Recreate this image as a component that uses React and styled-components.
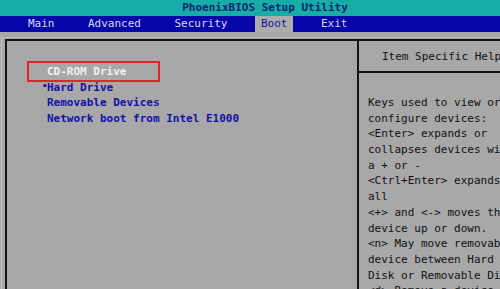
import React from 'react';
import styled, {createGlobalStyle} from "styled-components";

const GlobalStyle = createGlobalStyle`
    html, body {
        margin: 0;
        padding: 0;
        background: #a8a8a8;
    }
    body {
        width: 500px;
        height: 289px;
        overflow: hidden;
    }
`

const menus = ["Main", "Advanced", "Security", "Boot", "Exit"]

const devices = [
	{name: "CD-ROM Drive", active: true},
	{name: "Hard Drive", bullet: true},
	{name: "Removable Devices"},
	{name: "Network boot from Intel E1000"},
]

const helpLines = [
	"Keys used to view or",
	"configure devices:",
	"<Enter> expands or",
	"collapses devices with",
	"a + or -",
	"<Ctrl+Enter> expands",
	"all",
	"<+> and <-> moves the",
	"device up or down.",
	"<n> May move removable",
	"device between Hard",
	"Disk or Removable Disk",
	"<d> Remove a device",
]

const App = () => {
	return (
		<Screen>
			<GlobalStyle/>
			<TitleBar>PhoenixBIOS Setup Utility</TitleBar>
			<MenuBar>
				{menus.map((item) => (
					<MenuItem key={item} $selected={item === "Boot"}>{item}</MenuItem>
				))}
			</MenuBar>
			<Frame>
				<DevicePanel>
					{devices.map((item) => {
						const row = (
							<Device key={item.name} $active={item.active}>
								{item.bullet && <Bullet>•</Bullet>}
								{item.name}
							</Device>
						)
						return item.active ? <Marked key={item.name}>{row}</Marked> : row
					})}
				</DevicePanel>
				<HelpPanel>
					<HelpHeader>Item Specific Help</HelpHeader>
					<HelpBody>
						{helpLines.map((line, index) => (
							<HelpLine key={index}>{line}</HelpLine>
						))}
					</HelpBody>
				</HelpPanel>
			</Frame>
		</Screen>
	);
};

export default App;

const Screen = styled.div`
    width: 500px;
    height: 289px;
    overflow: hidden;
    display: flex;
    flex-direction: column;
    background: #a8a8a8;
    font-family: "DejaVu Sans Mono", "Liberation Mono", monospace;
    font-size: 11px;
`
const TitleBar = styled.div`
    height: 16px;
    line-height: 16px;
    background: #17aca6;
    color: #0c2470;
    font-weight: bold;
    text-align: center;
    white-space: nowrap;
    padding-left: 30px;
`
const MenuBar = styled.div`
    height: 16px;
    background: #0606a8;
    display: flex;
    column-gap: 21.5px;
    padding-left: 22px;
`
const MenuItem = styled.div`
    line-height: 16px;
    padding: 0 6px;
    white-space: nowrap;
    color: ${({$selected}) => $selected ? "#1010a0" : "#d8d8f4"};
    background: ${({$selected}) => $selected ? "#acacac" : "transparent"};
`
const Frame = styled.div`
    flex: 1;
    margin: 5px 0 0 1px;
    padding: 1px 0 0 3px;
    border-left: 1px solid #c4c4c4;
    border-top: 1px solid #bcbcbc;
    display: flex;
    min-height: 0;
`
const DevicePanel = styled.div`
    width: 354px;
    flex-shrink: 0;
    box-sizing: border-box;
    border-top: 2px solid #141414;
    border-left: 2px solid #141414;
    border-right: 2px solid #141414;
    padding: 20px 0 0 40px;
`
const Marked = styled.div`
    width: 133px;
    height: 21px;
    box-sizing: border-box;
    margin: 0 0 -2px -20px;
    padding: 1px 0 0 18px;
    border: 2px solid #e0262a;
`
const Device = styled.div`
    position: relative;
    height: 15.3px;
    line-height: 15.3px;
    white-space: nowrap;
    font-weight: bold;
    color: ${({$active}) => $active ? "#f0f0f0" : "#1212a6"};
`
const Bullet = styled.span`
    position: absolute;
    left: -5px;
    top: -1px;
    font-size: 9px;
`
const HelpPanel = styled.div`
    flex: 1;
    border-top: 2px solid #141414;
    display: flex;
    flex-direction: column;
    min-width: 0;
`
const HelpHeader = styled.div`
    height: 30px;
    line-height: 31px;
    padding-left: 23px;
    border-bottom: 2px solid #141414;
    white-space: nowrap;
    color: #111111;
`
const HelpBody = styled.div`
    padding: 22px 0 0 9px;
    color: #111111;
    white-space: nowrap;
`
const HelpLine = styled.div`
    height: 15.7px;
    line-height: 15.7px;
`
